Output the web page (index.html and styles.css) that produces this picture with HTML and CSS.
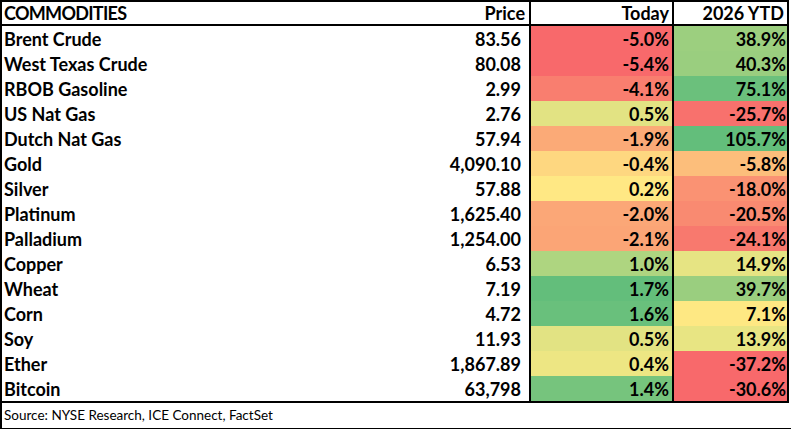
FILE: index.html
```html
<!DOCTYPE html>
<html>
<head>
<meta charset="utf-8">
<link rel="stylesheet" href="styles.css">
</head>
<body>
<div class="sheet">
  <div class="grid">
    <div class="cell head name caps">COMMODITIES</div>
    <div class="cell head price">Price</div>
    <div class="cell head today">Today</div>
    <div class="cell head ytd">2026 YTD</div>

    <div class="cell name">Brent Crude</div><div class="cell price">83.56</div><div class="cell today" style="background:#F8696B">-5.0%</div><div class="cell ytd" style="background:#9CCF7F">38.9%</div>
    <div class="cell name">West Texas Crude</div><div class="cell price">80.08</div><div class="cell today" style="background:#F8696B">-5.4%</div><div class="cell ytd" style="background:#9ACE7F">40.3%</div>
    <div class="cell name">RBOB Gasoline</div><div class="cell price">2.99</div><div class="cell today" style="background:#F97E6F">-4.1%</div><div class="cell ytd" style="background:#6BC07C">75.1%</div>
    <div class="cell name">US Nat Gas</div><div class="cell price">2.76</div><div class="cell today" style="background:#E2E383">0.5%</div><div class="cell ytd" style="background:#F8716D">-25.7%</div>
    <div class="cell name">Dutch Nat Gas</div><div class="cell price">57.94</div><div class="cell today" style="background:#FBAA77">-1.9%</div><div class="cell ytd" style="background:#63BE7B">105.7%</div>
    <div class="cell name">Gold</div><div class="cell price">4,090.10</div><div class="cell today" style="background:#FED780">-0.4%</div><div class="cell ytd" style="background:#FCBE7B">-5.8%</div>
    <div class="cell name">Silver</div><div class="cell price">57.88</div><div class="cell today" style="background:#FFE884">0.2%</div><div class="cell ytd" style="background:#FA9273">-18.0%</div>
    <div class="cell name">Platinum</div><div class="cell price">1,625.40</div><div class="cell today" style="background:#FBA777">-2.0%</div><div class="cell ytd" style="background:#F98A71">-20.5%</div>
    <div class="cell name">Palladium</div><div class="cell price">1,254.00</div><div class="cell today" style="background:#FBA576">-2.1%</div><div class="cell ytd" style="background:#F8796E">-24.1%</div>
    <div class="cell name">Copper</div><div class="cell price">6.53</div><div class="cell today" style="background:#AED580">1.0%</div><div class="cell ytd" style="background:#E6E483">14.9%</div>
    <div class="cell name">Wheat</div><div class="cell price">7.19</div><div class="cell today" style="background:#63BE7B">1.7%</div><div class="cell ytd" style="background:#9ACE7F">39.7%</div>
    <div class="cell name">Corn</div><div class="cell price">4.72</div><div class="cell today" style="background:#69C07C">1.6%</div><div class="cell ytd" style="background:#FEE883">7.1%</div>
    <div class="cell name">Soy</div><div class="cell price">11.93</div><div class="cell today" style="background:#E2E383">0.5%</div><div class="cell ytd" style="background:#E8E583">13.9%</div>
    <div class="cell name">Ether</div><div class="cell price">1,867.89</div><div class="cell today" style="background:#EDE683">0.4%</div><div class="cell ytd" style="background:#F8696B">-37.2%</div>
    <div class="cell name">Bitcoin</div><div class="cell price">63,798</div><div class="cell today" style="background:#76C47D">1.4%</div><div class="cell ytd" style="background:#F8696B">-30.6%</div>
  </div>
  <div class="source">Source: NYSE Research, ICE Connect, FactSet</div>
</div>
</body>
</html>
```

FILE: styles.css
```css
html, body {
  margin: 0;
  padding: 0;
  background: #ffffff;
  overflow: hidden;
}
body {
  font-family: "Lato", "Liberation Sans", sans-serif;
  color: #000000;
}
.sheet {
  width: 800px;
}
.grid {
  width: 789px;
  box-sizing: border-box;
  border: 2px solid #000;
  display: grid;
  grid-template-columns: 398px 131px 143px 1fr;
  grid-template-rows: 24px;
  grid-auto-rows: 25px;
}
.cell {
  box-sizing: border-box;
  font-weight: 700;
  font-size: 18px;
  line-height: 25px;
  padding-top: 1px;
  white-space: nowrap;
  overflow: hidden;
}
.head {
  line-height: 23px;
  padding-top: 0;
  border-bottom: 2px solid #000;
}
.caps {
  letter-spacing: -0.7px;
}
.name {
  padding-left: 2px;
}
.price {
  text-align: right;
  padding-right: 8px;
  border-right: 2px solid #000;
}
.head.price {
  padding-right: 4px;
}
.today {
  text-align: right;
  padding-right: 3px;
  border-right: 2px solid #000;
}
.ytd {
  text-align: right;
  padding-right: 1px;
}
.head.ytd {
  padding-right: 3px;
}
.source {
  box-sizing: border-box;
  width: 800px;
  height: 27px;
  border: 2px solid #000;
  border-top: none;
  padding-left: 2px;
  font-size: 13.5px;
  line-height: 25px;
  font-weight: 400;
}
```
